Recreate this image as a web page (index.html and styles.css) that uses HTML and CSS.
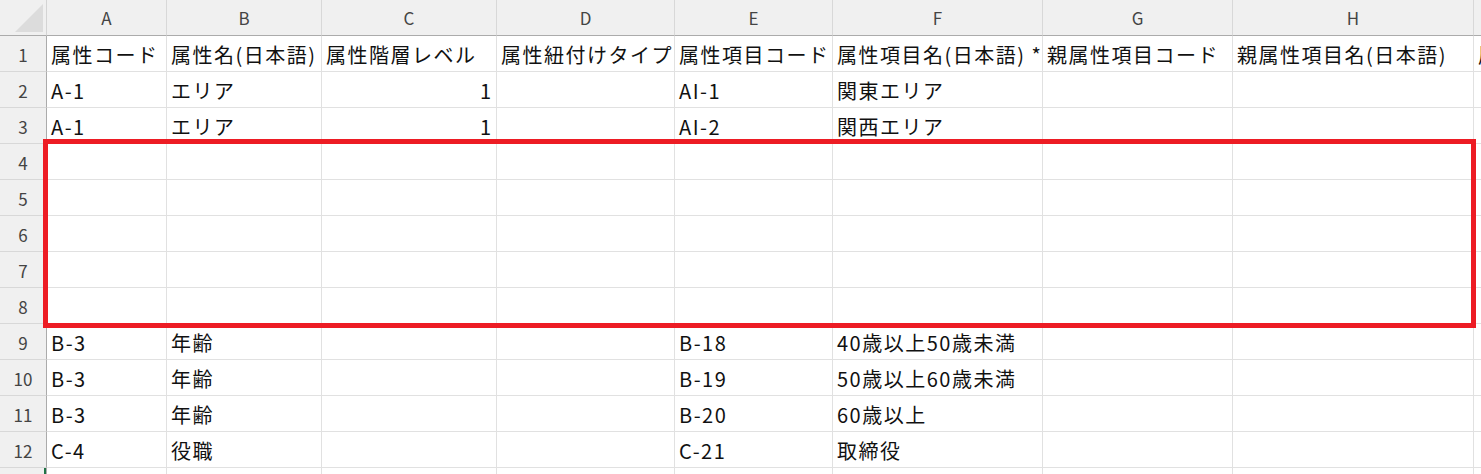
FILE: index.html
```html
<!DOCTYPE html>
<html lang="ja">
<head>
<meta charset="utf-8">
<title>Sheet</title>
<link rel="stylesheet" href="styles.css">
</head>
<body>
<div class="sheet">
  <div class="corner"><svg class="tri" width="30" height="30" viewBox="0 0 30 30"><polygon points="29,1 29,29 1,29" fill="#dcdcdc"/></svg></div>
  <div class="ch">A</div><div class="ch">B</div><div class="ch">C</div><div class="ch">D</div><div class="ch">E</div><div class="ch">F</div><div class="ch">G</div><div class="ch">H</div><div class="ch last"></div>

  <div class="rh">1</div>
  <div class="c">属性コード</div><div class="c">属性名(日本語)</div><div class="c">属性階層レベル</div><div class="c">属性紐付けタイプ</div><div class="c">属性項目コード</div><div class="c">属性項目名(日本語) *</div><div class="c">親属性項目コード</div><div class="c">親属性項目名(日本語)</div><div class="c">属性</div>

  <div class="rh">2</div>
  <div class="c">A-1</div><div class="c">エリア</div><div class="c num">1</div><div class="c"></div><div class="c">AI-1</div><div class="c">関東エリア</div><div class="c"></div><div class="c"></div><div class="c"></div>

  <div class="rh">3</div>
  <div class="c">A-1</div><div class="c">エリア</div><div class="c num">1</div><div class="c"></div><div class="c">AI-2</div><div class="c">関西エリア</div><div class="c"></div><div class="c"></div><div class="c"></div>

  <div class="rh">4</div>
  <div class="c"></div><div class="c"></div><div class="c"></div><div class="c"></div><div class="c"></div><div class="c"></div><div class="c"></div><div class="c"></div><div class="c"></div>
  <div class="rh">5</div>
  <div class="c"></div><div class="c"></div><div class="c"></div><div class="c"></div><div class="c"></div><div class="c"></div><div class="c"></div><div class="c"></div><div class="c"></div>
  <div class="rh">6</div>
  <div class="c"></div><div class="c"></div><div class="c"></div><div class="c"></div><div class="c"></div><div class="c"></div><div class="c"></div><div class="c"></div><div class="c"></div>
  <div class="rh">7</div>
  <div class="c"></div><div class="c"></div><div class="c"></div><div class="c"></div><div class="c"></div><div class="c"></div><div class="c"></div><div class="c"></div><div class="c"></div>
  <div class="rh">8</div>
  <div class="c"></div><div class="c"></div><div class="c"></div><div class="c"></div><div class="c"></div><div class="c"></div><div class="c"></div><div class="c"></div><div class="c"></div>

  <div class="rh">9</div>
  <div class="c">B-3</div><div class="c">年齢</div><div class="c"></div><div class="c"></div><div class="c">B-18</div><div class="c">40歳以上50歳未満</div><div class="c"></div><div class="c"></div><div class="c"></div>
  <div class="rh">10</div>
  <div class="c">B-3</div><div class="c">年齢</div><div class="c"></div><div class="c"></div><div class="c">B-19</div><div class="c">50歳以上60歳未満</div><div class="c"></div><div class="c"></div><div class="c"></div>
  <div class="rh">11</div>
  <div class="c">B-3</div><div class="c">年齢</div><div class="c"></div><div class="c"></div><div class="c">B-20</div><div class="c">60歳以上</div><div class="c"></div><div class="c"></div><div class="c"></div>
  <div class="rh">12</div>
  <div class="c">C-4</div><div class="c">役職</div><div class="c"></div><div class="c"></div><div class="c">C-21</div><div class="c">取締役</div><div class="c"></div><div class="c"></div><div class="c"></div>

  <div class="rh sel"></div>
  <div class="c"></div><div class="c"></div><div class="c"></div><div class="c"></div><div class="c"></div><div class="c"></div><div class="c"></div><div class="c"></div><div class="c"></div>

  <div class="highlight"></div>
</div>
</body>
</html>
```

FILE: styles.css
```css
html, body {
  margin: 0;
  padding: 0;
  background: #ffffff;
  overflow: hidden;
}

.sheet {
  position: relative;
  display: grid;
  grid-template-columns: 47px 120px 155px 175px 178px 158px 210px 190px 241px 60px;
  grid-auto-rows: 36px;
  width: 1534px;
  height: 474px;
  overflow: hidden;
  font-family: "Noto Sans CJK JP", "Noto Sans", sans-serif;
}

.corner {
  background: #f0f0f0;
  border-right: 1px solid #d4d4d4;
  border-bottom: 1px solid #ababab;
  display: flex;
  align-items: flex-start;
  justify-content: flex-end;
  padding: 3px 2px 0 0;
  box-sizing: border-box;
}

.tri {
  display: block;
}

.ch {
  background: #f0f0f0;
  border-right: 1px solid #d8d8d8;
  border-bottom: 1px solid #ababab;
  display: flex;
  align-items: center;
  justify-content: center;
  font-size: 17px;
  color: #444444;
  padding-bottom: 1px;
  box-sizing: border-box;
}

.rh {
  background: #f0f0f0;
  border-right: 1px solid #ababab;
  border-bottom: 1px solid #d8d8d8;
  display: flex;
  align-items: center;
  justify-content: center;
  font-size: 17px;
  color: #444444;
  padding-top: 1px;
  box-sizing: border-box;
}

.rh.sel {
  box-shadow: inset -2px 0 0 #217346;
}

.c {
  border-right: 1px solid #e1e1e1;
  border-bottom: 1px solid #e1e1e1;
  box-sizing: border-box;
  overflow: hidden;
  white-space: nowrap;
  font-size: 20px;
  line-height: 35px;
  letter-spacing: 1.5px;
  color: #111111;
  padding: 1px 0 0 4px;
}

.c.num {
  text-align: right;
  padding: 1px 5px 0 0;
  letter-spacing: 0;
}

.highlight {
  position: absolute;
  left: 43px;
  top: 139px;
  width: 1433px;
  height: 189px;
  border: 5px solid #ed1c24;
  box-sizing: border-box;
  pointer-events: none;
}
```
